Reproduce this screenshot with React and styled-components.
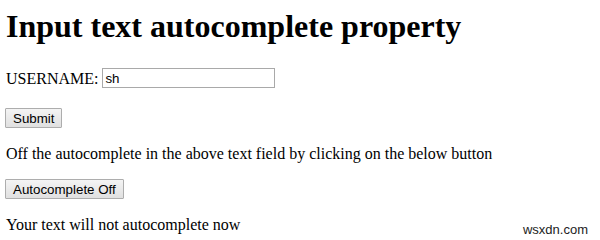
import React from 'react';
import styled, { createGlobalStyle } from 'styled-components';

const GlobalStyle = createGlobalStyle`
  html, body {
    margin: 0;
    padding: 0;
    background: #fff;
  }
  body {
    font-family: "Liberation Serif", "Times New Roman", serif;
    font-size: 16px;
    color: #000;
  }
`;

const Page = styled.div`
  position: relative;
  width: 600px;
  height: 240px;
  overflow: hidden;
  padding: 8px 6px 0;
  box-sizing: border-box;
`;

const Title = styled.h1`
  margin: 0 0 21px;
  font-size: 32px;
  font-weight: bold;
  line-height: 37px;
`;

const Para = styled.p`
  margin: 16px 0;
  line-height: 19px;
`;

const FieldRow = styled.div`
  display: flex;
  align-items: center;
  padding: 2px 0 4px;
  line-height: 19px;
`;

const ButtonRow = styled.div`
  display: flex;
  margin: 16px 0;
`;

const TextInput = styled.input`
  width: 173px;
  height: 20px;
  box-sizing: border-box;
  margin: 0 0 0 4px;
  padding: 1px 2px;
  border: 1px solid #a9a9a9;
  font-family: "Liberation Sans", Arial, sans-serif;
  font-size: 13.33px;
  color: #000;
  outline: none;
`;

const Button = styled.button`
  height: 20px;
  box-sizing: border-box;
  margin: 0 0 0 -1px;
  padding: 1px 7px;
  border: 1px solid #adadad;
  border-radius: 1px;
  background: linear-gradient(#f4f4f4, #e0e0e0);
  font-family: "Liberation Sans", Arial, sans-serif;
  font-size: 13.33px;
  color: #000;
  line-height: 15px;
`;

const Watermark = styled.div`
  position: absolute;
  right: 12px;
  bottom: 3px;
  font-family: "Liberation Sans", Arial, sans-serif;
  font-size: 13px;
  color: #222;
`;

export default function App() {
  return (
    <>
      <GlobalStyle />
      <Page>
        <Title>Input text autocomplete property</Title>
        <FieldRow>
          USERNAME:
          <TextInput type="text" defaultValue="sh" autoComplete="on" />
        </FieldRow>
        <ButtonRow>
          <Button type="button">Submit</Button>
        </ButtonRow>
        <Para>Off the autocomplete in the above text field by clicking on the below button</Para>
        <ButtonRow>
          <Button type="button">Autocomplete Off</Button>
        </ButtonRow>
        <Para>Your text will not autocomplete now</Para>
        <Watermark>wsxdn.com</Watermark>
      </Page>
    </>
  );
}
